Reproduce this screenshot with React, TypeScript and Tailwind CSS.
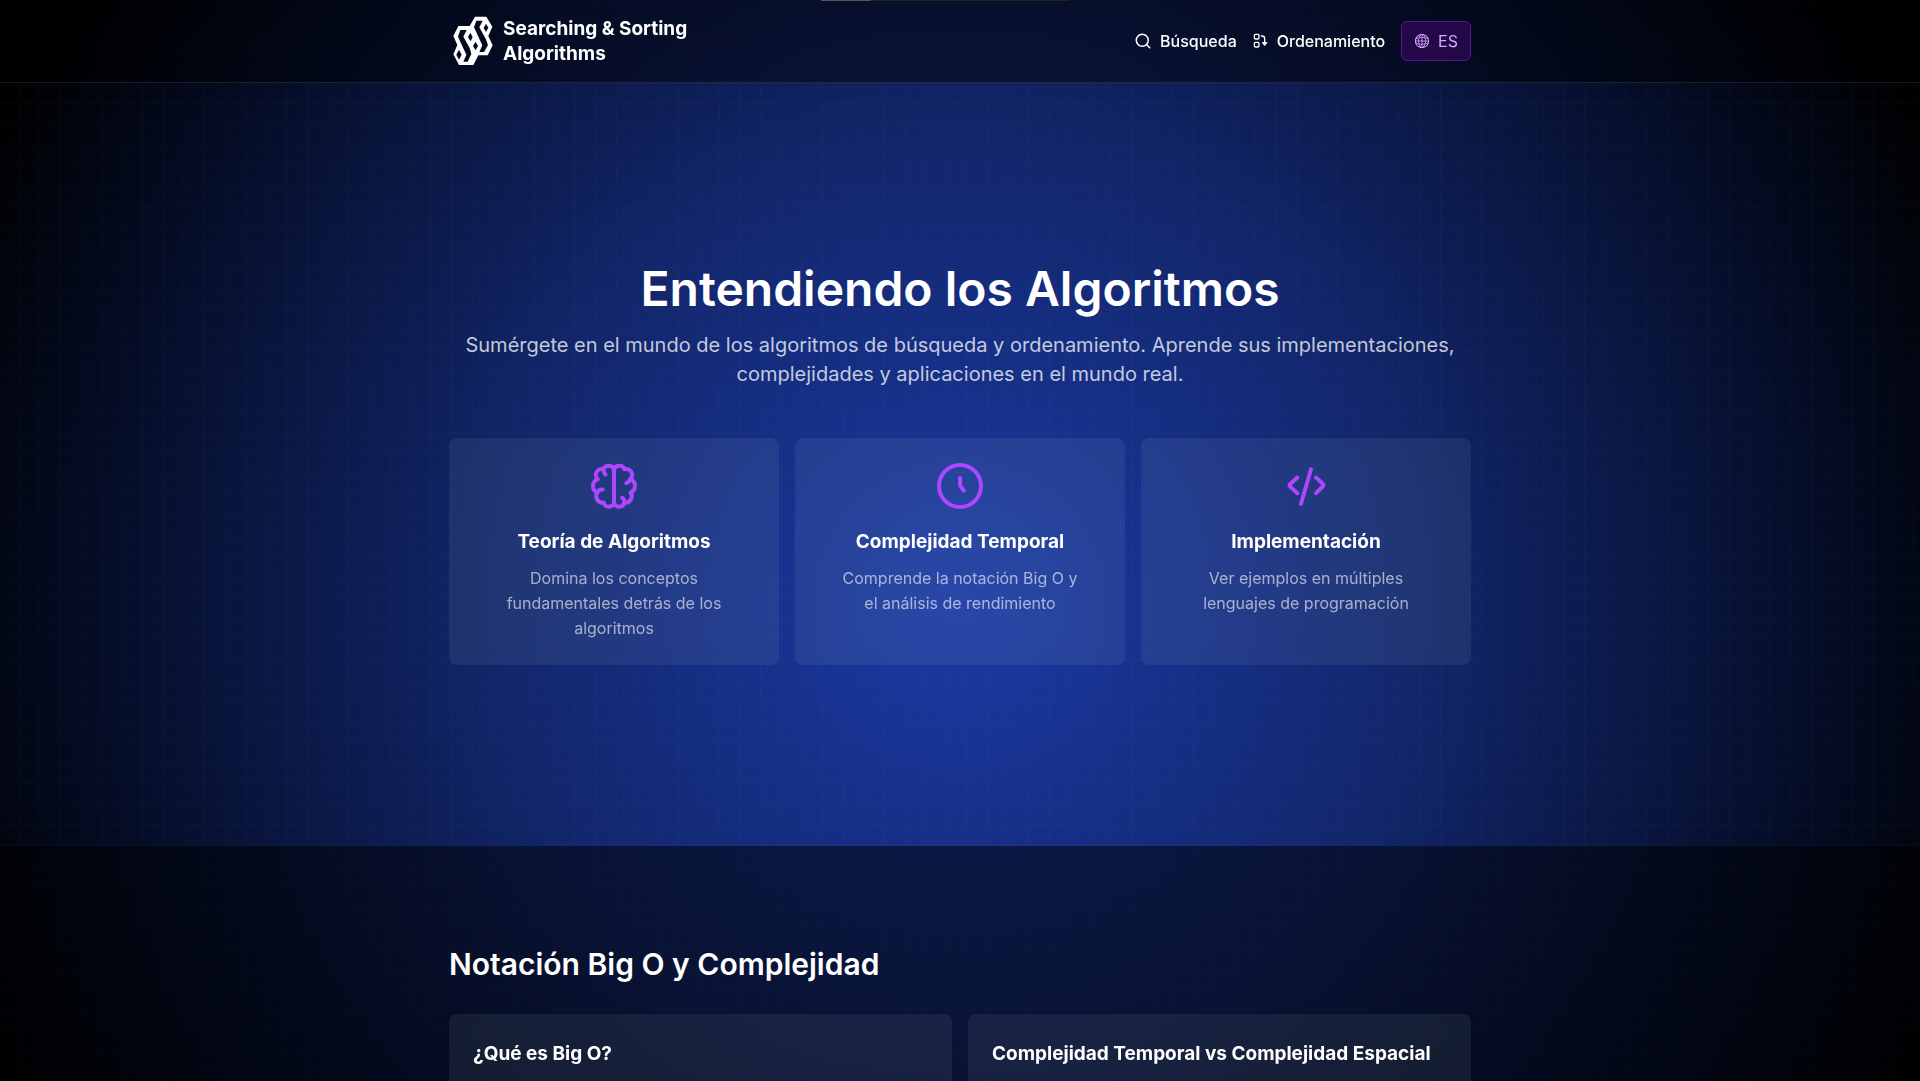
import type { ReactNode } from "react";
import { Search } from "lucide-react";
import { RxGlobe } from "react-icons/rx";

function Stroke({ className, children }: { className: string; children: ReactNode }) {
  return (
    <svg
      viewBox="0 0 24 24"
      className={className}
      fill="none"
      stroke="currentColor"
      strokeWidth="2"
      strokeLinecap="round"
      strokeLinejoin="round"
      aria-hidden="true"
    >
      {children}
    </svg>
  );
}

function Logo() {
  return (
    <svg viewBox="0 0 144 174" className="h-[58px] w-12 shrink-0" fill="currentColor" fillRule="evenodd" aria-hidden="true">
      <path
        d="M78 14H112L130 44 118 72 131 100 116 130H88L73 159H30L13 127 25 99 13 72 28 42H62Z
           M34 54H53L43 74 62 108 67 126 56 149H43L52 128 27 74Z
           M82 26H101L91 46 110 80 117 99 105 120H91L100 100 75 46Z
           M111 35 118 47 111 60 104 48Z
           M64 62 71 75 65 88 57 75Z
           M80 89 87 102 80 115 72 102Z
           M30 113 38 128 30 143 22 128Z"
      />
    </svg>
  );
}

function SortIcon() {
  return (
    <Stroke className="size-4">
      <rect x="2" y="2" width="7" height="7" rx="2" />
      <rect x="2" y="14" width="7" height="7" rx="2" />
      <path d="M12.5 4.5h1a4 4 0 0 1 4 4V15" />
      <path d="M14.5 14.5h6l-3 3.5z" fill="currentColor" />
    </Stroke>
  );
}

function BrainIcon() {
  return (
    <Stroke className="size-12">
      <path d="M12 4v16.5" />
      <path d="M12 4A2.7 2.7 0 0 0 6.8 3.7 A2.9 2.9 0 0 0 3.9 8.6 A3.6 3.6 0 0 0 3.7 15.3 A3.2 3.2 0 0 0 6.8 20.3 A2.7 2.7 0 0 0 12 20.5" />
      <path d="M12 4A2.7 2.7 0 0 1 17.2 3.7 A2.9 2.9 0 0 1 20.1 8.6 A3.6 3.6 0 0 1 20.3 15.3 A3.2 3.2 0 0 1 17.2 20.3 A2.7 2.7 0 0 1 12 20.5" />
      <path d="M6.8 3.7q-.1 1.8 1 2.6M3.7 15.3q.6-1.6 2.6-1.5M20.1 8.6q-.5 1.6-1.9 1.9M17.2 20.3q.2-1.6-1.1-2.4" />
    </Stroke>
  );
}

function ClockIcon() {
  return (
    <Stroke className="size-12">
      <circle cx="12" cy="12" r="10.5" />
      <path d="M12 8v3.3q0 .6.4 1.1L13.9 14.2" />
    </Stroke>
  );
}

function CodeIcon() {
  return (
    <Stroke className="size-12">
      <path d="M7.7 7.8 4.1 11q-.7.6 0 1.3l3.6 3.3M17 7.8l3.4 3.1q.7.6 0 1.3L17 15.6M14.5 3.6 9.5 20.9" />
    </Stroke>
  );
}

const features = [
  { icon: <BrainIcon />, title: "Teoría de Algoritmos", text: "Domina los conceptos fundamentales detrás de los algoritmos" },
  { icon: <ClockIcon />, title: "Complejidad Temporal", text: "Comprende la notación Big O y el análisis de rendimiento" },
  { icon: <CodeIcon />, title: "Implementación", text: "Ver ejemplos en múltiples lenguajes de programación" },
];

const topics = ["¿Qué es Big O?", "Complejidad Temporal vs Complejidad Espacial"];

function Backdrop() {
  return (
    <div className="absolute inset-0 -z-10 bg-[radial-gradient(circle_at_50%_56%,#1b3aa5_0%,#112568_480px,#050e2a_840px,#000_1080px)]">
      <svg className="size-full text-white/2" aria-hidden="true">
        <defs>
          <pattern id="grid" width="206" height="206" patternUnits="userSpaceOnUse" patternTransform="translate(-2 0) scale(0.1)">
            <path d="M5 0V206M0 5H206" stroke="currentColor" strokeWidth="12" />
          </pattern>
        </defs>
        <rect width="100%" height="100%" fill="url(#grid)" />
      </svg>
    </div>
  );
}

export default function App() {
  return (
    <div className="relative isolate flex min-h-screen flex-col overflow-hidden bg-black font-['Inter',sans-serif] text-white">
      <Backdrop />
      <div className="absolute top-0 left-1/2 z-10 -ml-[139px] flex h-px w-[248px] bg-[#222222]">
        <div className="w-1/5 bg-[#555555]" />
      </div>

      <header className="border-b border-white/10 bg-black/45 px-8 backdrop-blur-lg">
        <div className="mx-auto flex h-[82px] max-w-[1022px] items-center justify-between">
          <a href="#inicio" className="flex items-center gap-1.5 text-[19px] leading-[25px] font-bold">
            <Logo />
            <span>
              Searching &amp; Sorting
              <br />
              Algorithms
            </span>
          </a>
          <nav className="flex items-center gap-4 text-base font-medium">
            <a href="#busqueda" className="flex items-center gap-2">
              <Search className="size-[18px]" />
              Búsqueda
            </a>
            <a href="#ordenamiento" className="flex items-center gap-2">
              <SortIcon />
              Ordenamiento
            </a>
            <button
              type="button"
              className="flex h-10 items-center gap-2 rounded-md border border-[#59129b] bg-[#230848] px-3 font-normal text-[#d5a8fb]"
            >
              <RxGlobe className="size-4" />
              ES
            </button>
          </nav>
        </div>
      </header>

      <main className="flex flex-1 flex-col">
        <section id="inicio" className="px-8 pt-44 pb-[181px]">
          <div className="mx-auto max-w-[1022px] text-center">
            <h1 className="text-5xl leading-[60px] font-semibold">Entendiendo los Algoritmos</h1>
            <p className="mt-3 text-xl leading-[29px] text-white/75">
              Sumérgete en el mundo de los algoritmos de búsqueda y ordenamiento. Aprende sus implementaciones,
              complejidades y aplicaciones en el mundo real.
            </p>
            <div className="mt-[49px] grid grid-cols-3 gap-4">
              {features.map((f) => (
                <article key={f.title} className="flex flex-col items-center rounded-lg bg-[#e4fff0]/7 p-6 backdrop-blur-sm">
                  <span className="text-[#ad46ff]">{f.icon}</span>
                  <h3 className="mt-4 text-[19px] leading-8 font-bold">{f.title}</h3>
                  <p className="mt-2 px-5 text-base leading-[25px] text-white/60">{f.text}</p>
                </article>
              ))}
            </div>
          </div>
        </section>

        <section className="flex flex-1 flex-col bg-black/50 px-8 pt-25">
          <div className="mx-auto flex w-full max-w-[1022px] flex-1 flex-col">
            <h2 className="text-3xl leading-9 font-semibold">Notación Big O y Complejidad</h2>
            <div className="mt-8 grid flex-1 grid-cols-2 gap-4">
              {topics.map((t) => (
                <article key={t} className="rounded-t-lg bg-[#e4fff0]/7 px-6 pt-6 backdrop-blur-sm">
                  <h3 className="text-[19px] leading-8 font-bold">{t}</h3>
                </article>
              ))}
            </div>
          </div>
        </section>
      </main>
    </div>
  );
}
